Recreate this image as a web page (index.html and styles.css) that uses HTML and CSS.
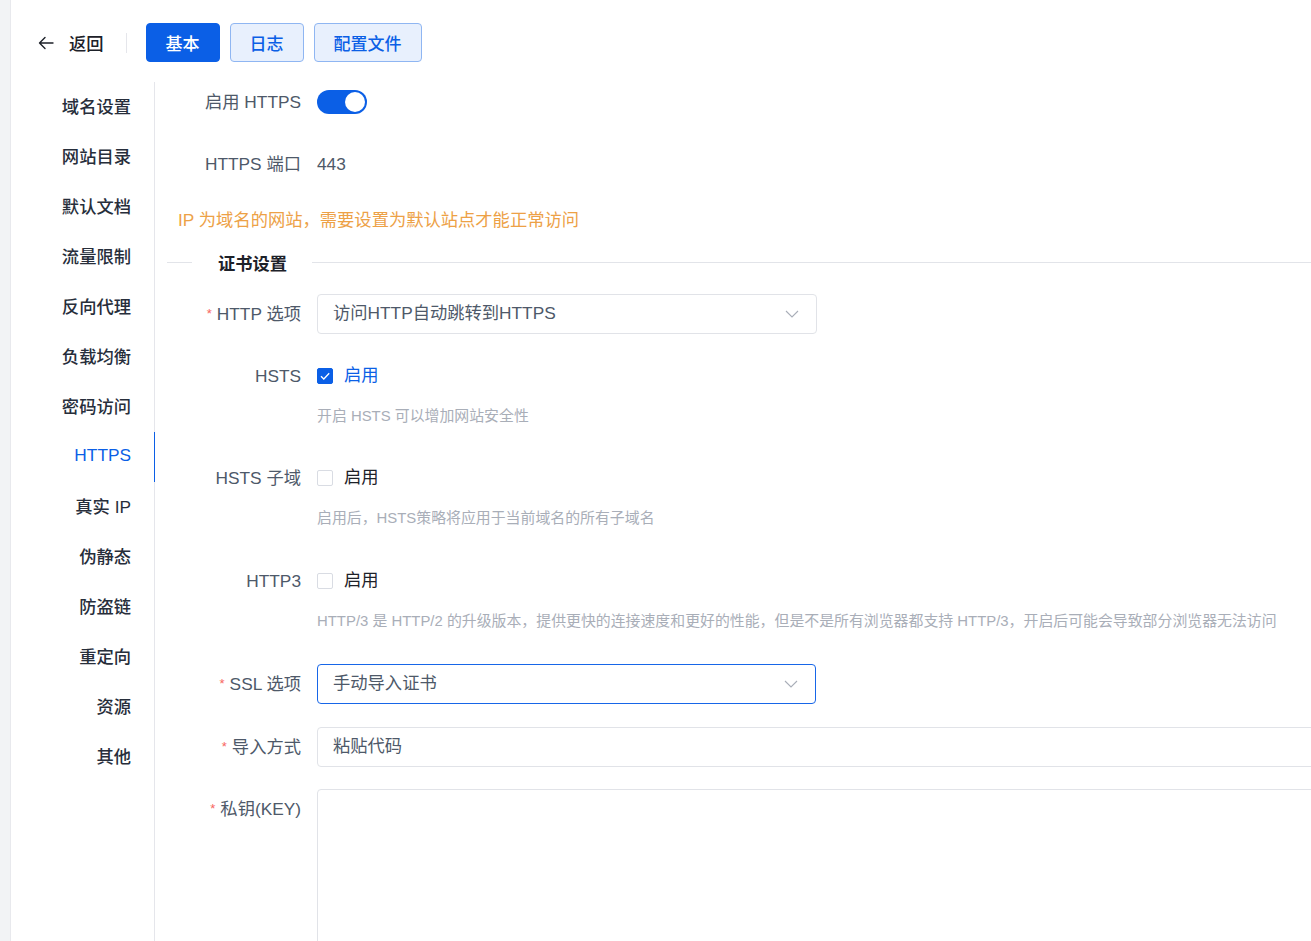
FILE: index.html
```html
<!DOCTYPE html>
<html lang="zh-CN">
<head>
<meta charset="utf-8">
<title>HTTPS 设置</title>
<link rel="stylesheet" href="styles.css">
</head>
<body>
<div class="panel">
  <div class="topbar">
    <a class="back">
      <svg class="back-icon" width="16" height="16" viewBox="0 0 16 16"><path d="M15 8H1.5M7 2.5L1.5 8L7 13.5" fill="none" stroke="#1d2129" stroke-width="1.4" stroke-linecap="round" stroke-linejoin="round"/></svg>
      <span>返回</span>
    </a>
    <span class="vdiv"></span>
    <button class="btn btn-primary">基本</button>
    <button class="btn btn-light">日志</button>
    <button class="btn btn-light">配置文件</button>
  </div>
  <div class="main">
    <nav class="menu">
      <div class="menu-item">域名设置</div>
      <div class="menu-item">网站目录</div>
      <div class="menu-item">默认文档</div>
      <div class="menu-item">流量限制</div>
      <div class="menu-item">反向代理</div>
      <div class="menu-item">负载均衡</div>
      <div class="menu-item">密码访问</div>
      <div class="menu-item active">HTTPS</div>
      <div class="menu-item">真实 IP</div>
      <div class="menu-item">伪静态</div>
      <div class="menu-item">防盗链</div>
      <div class="menu-item">重定向</div>
      <div class="menu-item">资源</div>
      <div class="menu-item">其他</div>
    </nav>
    <div class="form">
      <div class="item">
        <label class="label">启用 HTTPS</label>
        <div class="control center"><span class="switch"><span class="knob"></span></span></div>
      </div>
      <div class="item mb24">
        <label class="label">HTTPS 端口</label>
        <div class="control center"><span class="value">443</span></div>
      </div>
      <div class="notice">IP 为域名的网站，需要设置为默认站点才能正常访问</div>
      <div class="divider">
        <span class="dline short"></span>
        <span class="dtext">证书设置</span>
        <span class="dline long"></span>
      </div>
      <div class="item">
        <label class="label"><span class="req">*</span>HTTP 选项</label>
        <div class="control">
          <div class="select"><span class="sel-text">访问HTTP自动跳转到HTTPS</span>
            <svg class="chev" width="14" height="8" viewBox="0 0 14 8"><path d="M1 1l6 6 6-6" fill="none" stroke="#a9aeb8" stroke-width="1.1"/></svg>
          </div>
        </div>
      </div>
      <div class="item mb32">
        <label class="label">HSTS</label>
        <div class="control">
          <div class="check-row"><span class="checkbox checked"><svg width="12" height="10" viewBox="0 0 12 10"><path d="M2 5.2l2.8 2.8L10.2 2.2" fill="none" stroke="#fff" stroke-width="1.3"/></svg></span><span class="check-text on">启用</span></div>
          <div class="help">开启 HSTS 可以增加网站安全性</div>
        </div>
      </div>
      <div class="item mb33">
        <label class="label">HSTS 子域</label>
        <div class="control">
          <div class="check-row"><span class="checkbox"></span><span class="check-text">启用</span></div>
          <div class="help">启用后，HSTS策略将应用于当前域名的所有子域名</div>
        </div>
      </div>
      <div class="item mb33">
        <label class="label">HTTP3</label>
        <div class="control">
          <div class="check-row"><span class="checkbox"></span><span class="check-text">启用</span></div>
          <div class="help">HTTP/3 是 HTTP/2 的升级版本，提供更快的连接速度和更好的性能，但是不是所有浏览器都支持 HTTP/3，开启后可能会导致部分浏览器无法访问</div>
        </div>
      </div>
      <div class="item mb23">
        <label class="label"><span class="req">*</span>SSL 选项</label>
        <div class="control">
          <div class="select focus"><span class="sel-text">手动导入证书</span>
            <svg class="chev" width="14" height="8" viewBox="0 0 14 8"><path d="M1 1l6 6 6-6" fill="none" stroke="#a9aeb8" stroke-width="1.1"/></svg>
          </div>
        </div>
      </div>
      <div class="item">
        <label class="label"><span class="req">*</span>导入方式</label>
        <div class="control">
          <div class="input wide"><span class="sel-text">粘贴代码</span></div>
        </div>
      </div>
      <div class="item">
        <label class="label"><span class="req">*</span>私钥(KEY)</label>
        <div class="control">
          <div class="textarea wide"></div>
        </div>
      </div>
    </div>
  </div>
</div>
</body>
</html>
```

FILE: styles.css
```css
html, body {
  margin: 0;
  padding: 0;
  overflow: hidden;
  height: 100%;
}
body {
  background: #f2f3f5;
  padding-left: 10px;
  font-family: "Liberation Sans", "Noto Sans CJK SC", sans-serif;
  font-size: 17.3px;
  color: #1d2129;
}
.panel {
  background: #fff;
  border-left: 1px solid #e8e9ed;
  height: 100vh;
  padding-top: 23px;
  box-sizing: border-box;
}
.topbar {
  display: flex;
  align-items: center;
  height: 39px;
  padding-left: 27px;
}
.back {
  display: flex;
  align-items: center;
  gap: 15px;
  color: #1d2129;
  font-weight: 500;
}
.back-icon { display: block; }
.vdiv {
  width: 1px;
  height: 20px;
  background: #e5e6eb;
  margin: 0 19px 0 22px;
}
.btn {
  height: 39px;
  padding: 0 19px;
  border-radius: 4px;
  font-family: inherit;
  font-size: 17px;
  font-weight: 500;
  margin-right: 10px;
  cursor: pointer;
  box-sizing: border-box;
}
.btn-primary {
  background: #0b5fe6;
  border: 1px solid #0b5fe6;
  color: #fff;
}
.btn-light {
  background: #e8f0fd;
  border: 1px solid #8fb6f2;
  color: #0b5fe6;
}
.main {
  display: flex;
  margin-top: 20px;
  height: calc(100vh - 82px);
}
.menu {
  width: 143px;
  flex: none;
  border-right: 1px solid #e5e6eb;
}
.menu-item {
  position: relative;
  height: 50px;
  line-height: 50px;
  text-align: right;
  padding-right: 23px;
  color: #272e3b;
  font-weight: 500;
}
.menu-item.active {
  color: #0b5fe6;
  font-weight: 400;
  line-height: 46px;
}
.menu-item.active::after {
  content: "";
  position: absolute;
  right: -1px;
  top: 0;
  width: 1px;
  height: 50px;
  background: #0b5fe6;
}
.form {
  flex: 1;
  min-width: 0;
  overflow: hidden;
  padding-left: 12px;
}
.item {
  display: flex;
  align-items: flex-start;
  margin-bottom: 22px;
}
.item.mb24 { margin-bottom: 24px; }
.item.mb32 { margin-bottom: 32px; }
.item.mb33 { margin-bottom: 33px; }
.item.mb23 { margin-bottom: 23px; }
.label {
  width: 134px;
  flex: none;
  text-align: right;
  line-height: 40px;
  margin-right: 16px;
  color: #4e5969;
  white-space: nowrap;
}
.req {
  color: #f76560;
  font-size: 13px;
  margin-right: 5px;
  vertical-align: 2px;
}
.control {
  display: flex;
  flex-direction: column;
  min-width: 0;
}
.control.center {
  height: 40px;
  justify-content: center;
}
.switch {
  display: block;
  width: 50px;
  height: 24px;
  border-radius: 12px;
  background: #0b5fe6;
  position: relative;
}
.knob {
  position: absolute;
  right: 2px;
  top: 2px;
  width: 20px;
  height: 20px;
  border-radius: 50%;
  background: #fff;
}
.value { color: #4e5969; }
.notice {
  color: #eda146;
  line-height: 24px;
  padding-left: 11px;
  margin-bottom: 18px;
  white-space: nowrap;
}
.divider {
  display: flex;
  align-items: center;
  height: 24px;
  margin-bottom: 20px;
}
.dline {
  height: 1px;
  background: #e2e4e9;
}
.dline.short { width: 25px; flex: none; }
.dline.long { flex: 1; }
.dtext {
  margin: 0 25px 0 26px;
  font-weight: 700;
  color: #1d2129;
}
.select, .input {
  width: 500px;
  height: 40px;
  box-sizing: border-box;
  border: 1px solid #e1e3e8;
  border-radius: 4px;
  display: flex;
  align-items: center;
  justify-content: space-between;
  padding: 0 17px 0 15px;
  color: #4e5969;
  white-space: nowrap;
}
.sel-text {
  line-height: 20px;
  padding-bottom: 3px;
}
.select.focus {
  border-color: #1766e8;
  width: 499px;
}
.chev { display: block; }
.wide { width: 1100px; }
.textarea {
  height: 300px;
  box-sizing: border-box;
  border: 1px solid #e1e3e8;
  border-radius: 4px;
}
.check-row {
  display: flex;
  align-items: center;
  height: 40px;
}
.checkbox {
  width: 16px;
  height: 16px;
  box-sizing: border-box;
  border: 1px solid #d9dce3;
  border-radius: 2px;
  margin-right: 11px;
  display: flex;
  align-items: center;
  justify-content: center;
  background: #fff;
}
.checkbox.checked {
  background: #0b5fe6;
  border-color: #0b5fe6;
}
.checkbox svg { display: block; }
.check-text {
  color: #1d2129;
  line-height: 20px;
  padding-bottom: 3px;
}
.check-text.on { color: #0b5fe6; }
.help {
  margin-top: 10px;
  line-height: 20px;
  font-size: 14.9px;
  color: #a9aeb8;
  white-space: nowrap;
}
```
